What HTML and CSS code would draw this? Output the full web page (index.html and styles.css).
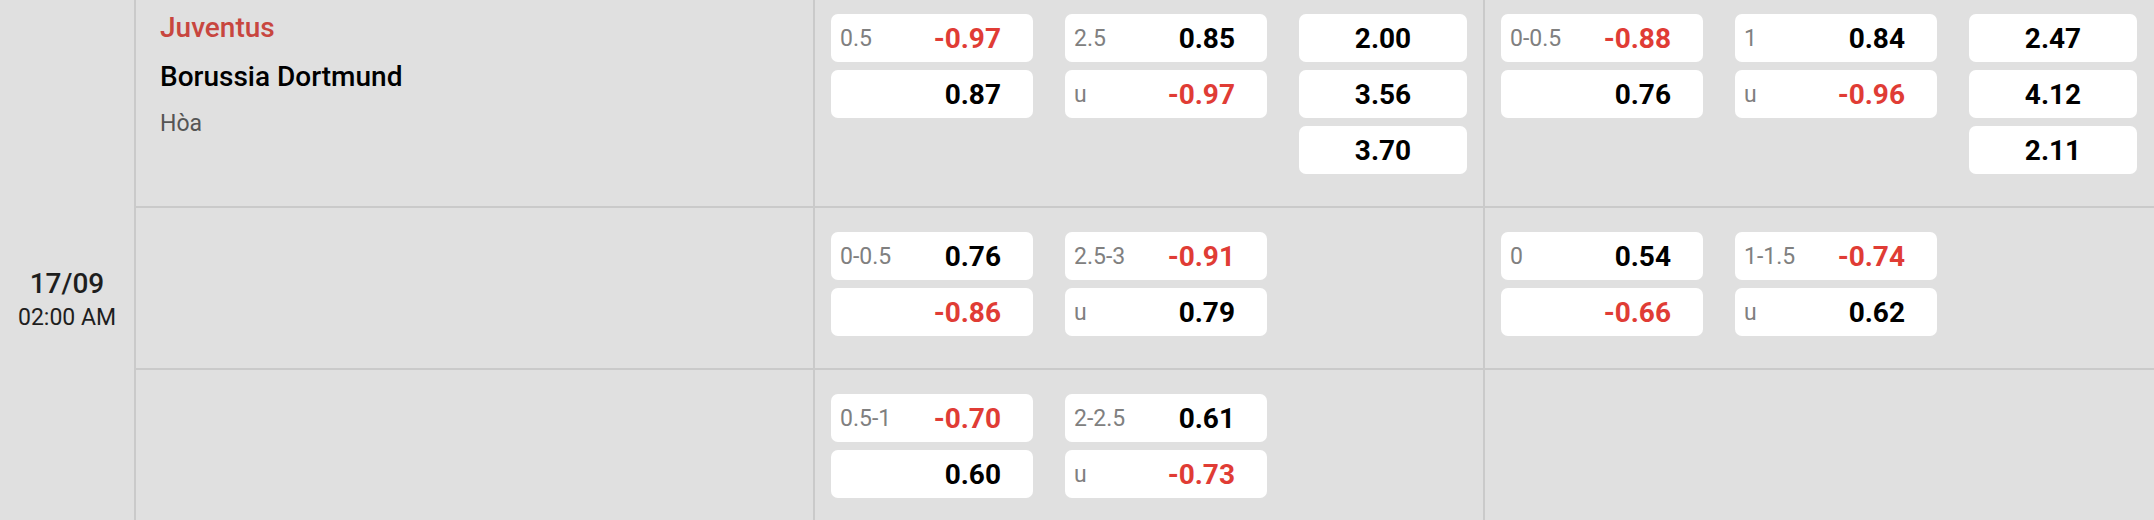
FILE: index.html
```html
<!DOCTYPE html>
<html lang="vi">
<head>
<meta charset="utf-8">
<title>Kèo Juventus - Borussia Dortmund</title>
<link rel="stylesheet" href="styles.css">
</head>
<body>
<div class="board">
  <div class="date-col">
    <div class="date">17/09</div>
    <div class="time">02:00 AM</div>
  </div>
  <div class="rows">
    <div class="row">
      <div class="teams">
        <div class="team home">Juventus</div>
        <div class="team away">Borussia Dortmund</div>
        <div class="draw">Hòa</div>
      </div>
      <div class="group">
        <div class="col">
          <div class="odd"><span class="lbl">0.5</span><span class="val neg">-0.97</span></div>
          <div class="odd"><span class="lbl"></span><span class="val">0.87</span></div>
        </div>
        <div class="col">
          <div class="odd"><span class="lbl">2.5</span><span class="val">0.85</span></div>
          <div class="odd"><span class="lbl">u</span><span class="val neg">-0.97</span></div>
        </div>
        <div class="col">
          <div class="odd x12"><span class="val">2.00</span></div>
          <div class="odd x12"><span class="val">3.56</span></div>
          <div class="odd x12"><span class="val">3.70</span></div>
        </div>
      </div>
      <div class="group">
        <div class="col">
          <div class="odd"><span class="lbl">0-0.5</span><span class="val neg">-0.88</span></div>
          <div class="odd"><span class="lbl"></span><span class="val">0.76</span></div>
        </div>
        <div class="col">
          <div class="odd"><span class="lbl">1</span><span class="val">0.84</span></div>
          <div class="odd"><span class="lbl">u</span><span class="val neg">-0.96</span></div>
        </div>
        <div class="col">
          <div class="odd x12"><span class="val">2.47</span></div>
          <div class="odd x12"><span class="val">4.12</span></div>
          <div class="odd x12"><span class="val">2.11</span></div>
        </div>
      </div>
    </div>

    <div class="row">
      <div class="teams"></div>
      <div class="group">
        <div class="col">
          <div class="odd"><span class="lbl">0-0.5</span><span class="val">0.76</span></div>
          <div class="odd"><span class="lbl"></span><span class="val neg">-0.86</span></div>
        </div>
        <div class="col">
          <div class="odd"><span class="lbl">2.5-3</span><span class="val neg">-0.91</span></div>
          <div class="odd"><span class="lbl">u</span><span class="val">0.79</span></div>
        </div>
      </div>
      <div class="group">
        <div class="col">
          <div class="odd"><span class="lbl">0</span><span class="val">0.54</span></div>
          <div class="odd"><span class="lbl"></span><span class="val neg">-0.66</span></div>
        </div>
        <div class="col">
          <div class="odd"><span class="lbl">1-1.5</span><span class="val neg">-0.74</span></div>
          <div class="odd"><span class="lbl">u</span><span class="val">0.62</span></div>
        </div>
      </div>
    </div>

    <div class="row">
      <div class="teams"></div>
      <div class="group">
        <div class="col">
          <div class="odd"><span class="lbl">0.5-1</span><span class="val neg">-0.70</span></div>
          <div class="odd"><span class="lbl"></span><span class="val">0.60</span></div>
        </div>
        <div class="col">
          <div class="odd"><span class="lbl">2-2.5</span><span class="val">0.61</span></div>
          <div class="odd"><span class="lbl">u</span><span class="val neg">-0.73</span></div>
        </div>
      </div>
      <div class="group"></div>
    </div>
  </div>
</div>
</body>
</html>
```
FILE: styles.css
```css
html, body {
  margin: 0;
  padding: 0;
  background: #e0e0e0;
  font-family: Roboto, "Liberation Sans", sans-serif;
  color: #000;
}

.board {
  display: flex;
  margin-top: -10px;
  min-height: 600px;
}

.date-col {
  width: 136px;
  flex: none;
  border-right: 2px solid #cacaca;
  display: flex;
  flex-direction: column;
  align-items: center;
  padding-top: 278px;
  box-sizing: border-box;
  color: #1e1e1e;
}

.date {
  font-size: 28px;
  font-weight: 500;
  line-height: 32px;
}

.time {
  font-size: 23px;
  line-height: 36px;
}

.rows {
  flex: 1;
  display: flex;
  flex-direction: column;
}

.row {
  display: flex;
  border-bottom: 2px solid #cacaca;
}

.teams {
  width: 677px;
  flex: none;
  box-sizing: border-box;
  padding: 22px 0 0 24px;
}

.team {
  font-size: 28px;
  font-weight: 500;
  line-height: 32px;
  margin-bottom: 17px;
}

.team.home {
  color: #c8463f;
}

.draw {
  font-size: 23px;
  line-height: 28px;
  color: #555;
}

.group {
  width: 670px;
  flex: none;
  box-sizing: border-box;
  border-left: 2px solid #cacaca;
  padding: 24px 16px 32px;
  display: flex;
  gap: 32px;
}

.col {
  display: flex;
  flex-direction: column;
  gap: 8px;
}

.odd {
  width: 202px;
  height: 48px;
  box-sizing: border-box;
  background: #fff;
  border-radius: 7px;
  display: flex;
  align-items: center;
  padding: 0 32px 0 9px;
}

.odd.x12 {
  width: 168px;
  justify-content: center;
  padding: 0;
}

.lbl {
  font-size: 23px;
  color: #808080;
}

.val {
  margin-left: auto;
  font-size: 28px;
  font-weight: 700;
  color: #000;
}

.x12 .val {
  margin-left: 0;
}

.val.neg {
  color: #e03c35;
}
```
